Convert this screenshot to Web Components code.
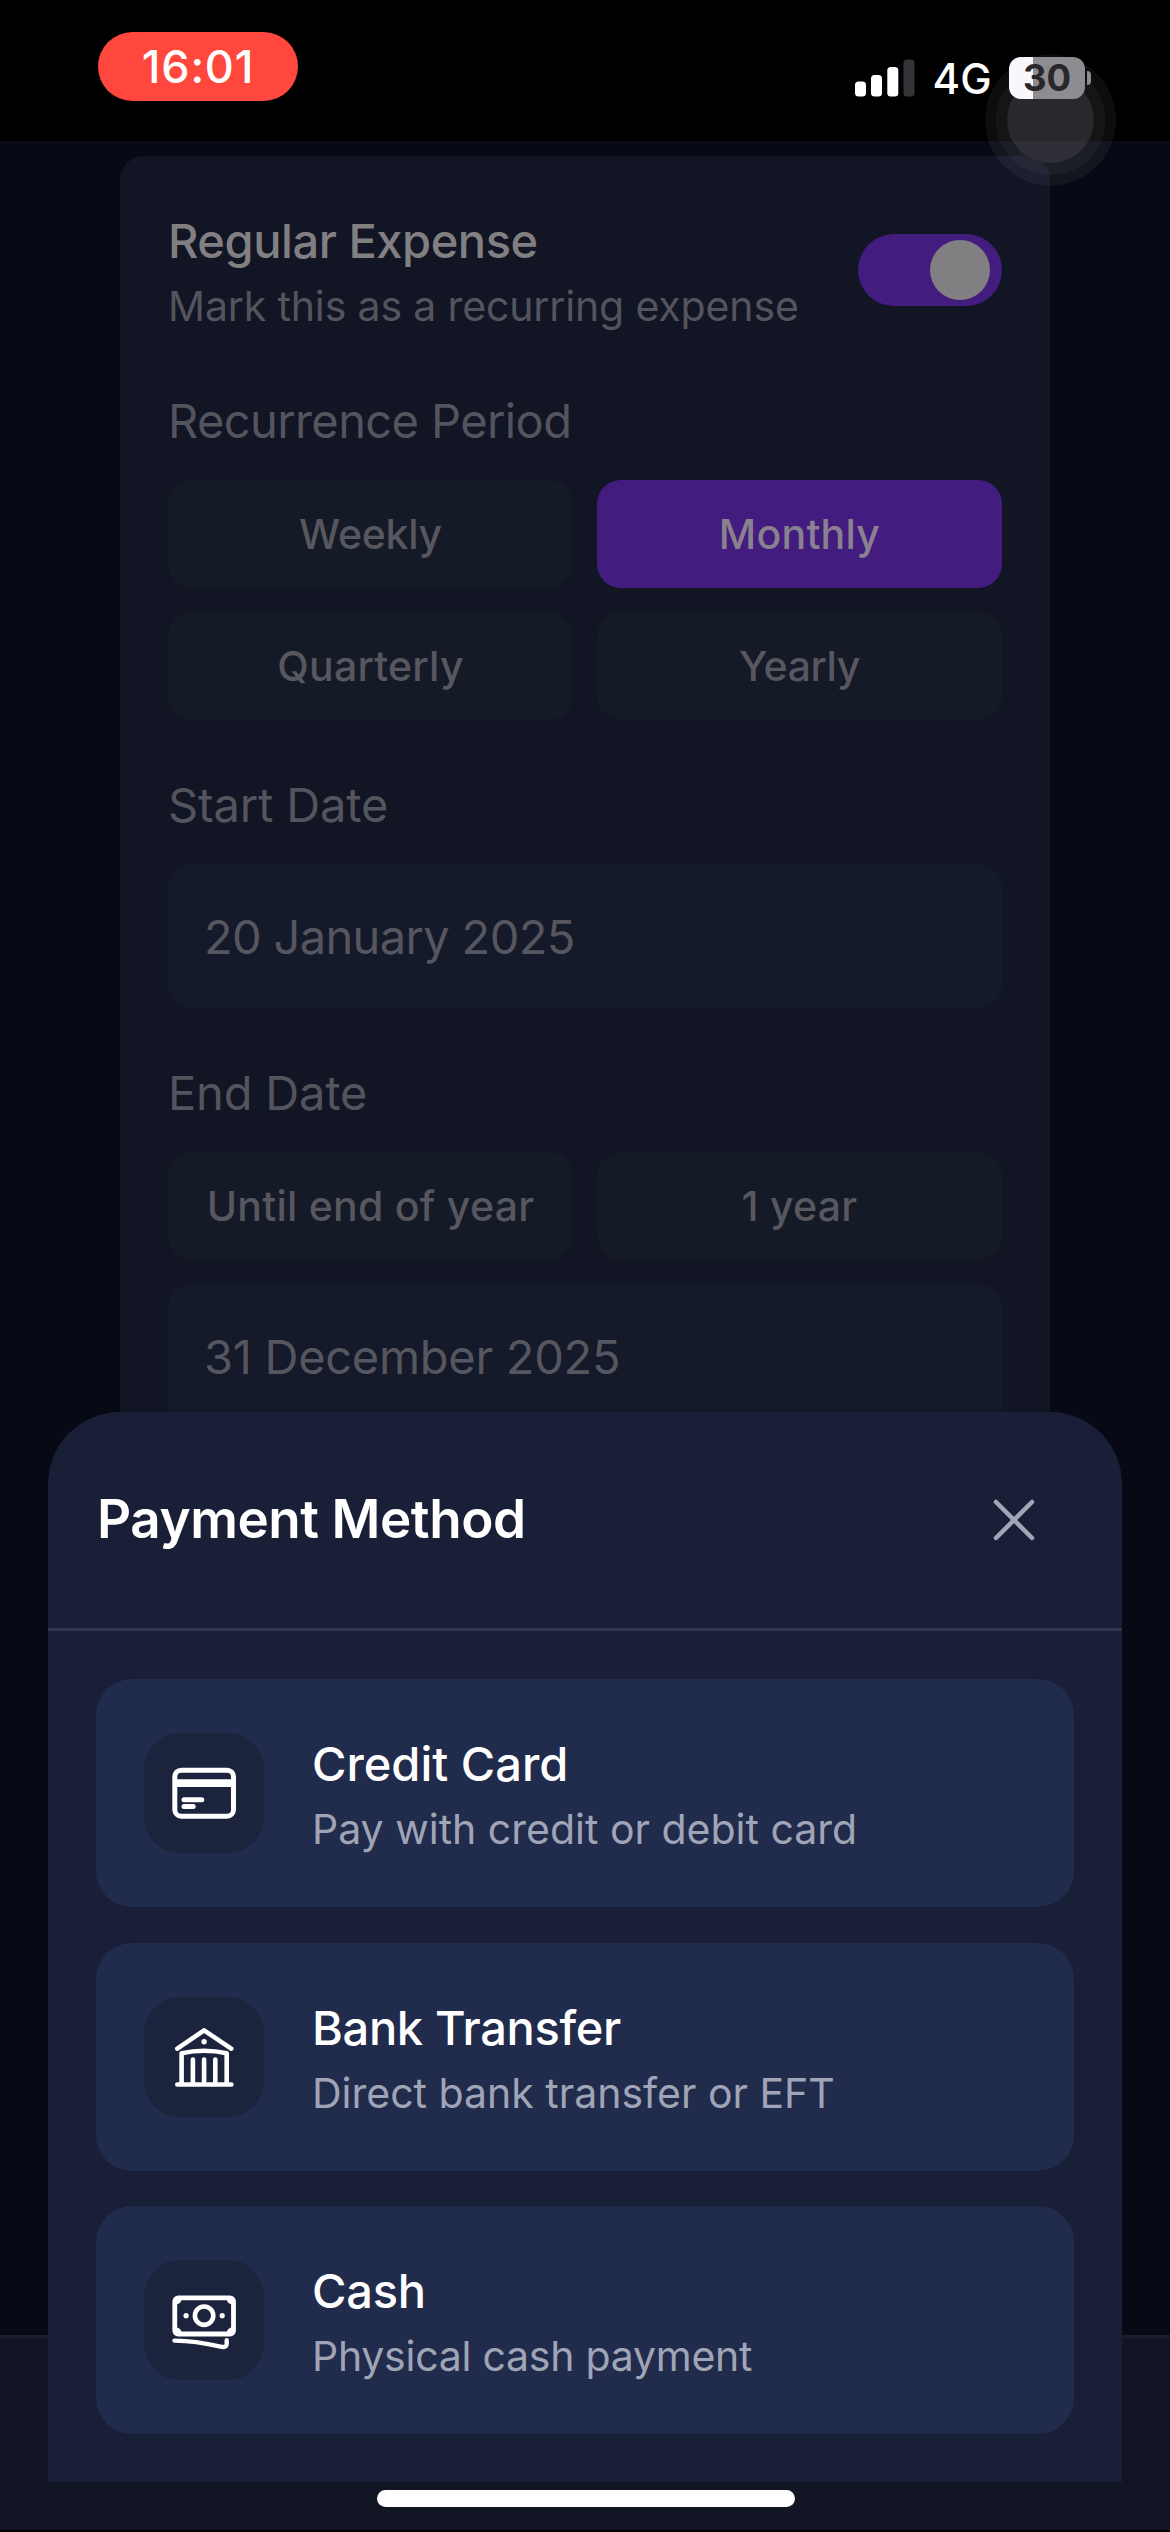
<!DOCTYPE html>
<html lang="en">
<head>
<meta charset="utf-8">
<title>Payment Method</title>
<style>
html, body { margin: 0; padding: 0; background: #070a14; }
body { width: 1170px; height: 2532px; overflow: hidden; font-family: Inter, "Liberation Sans", sans-serif; font-kerning: normal; }
</style>
</head>
<body>
<app-screen></app-screen>
<script>
function define(name, html) {
  const tpl = document.createElement('template');
  tpl.innerHTML = html;
  customElements.define(name, class extends HTMLElement {
    constructor() {
      super();
      this.attachShadow({ mode: 'open' }).appendChild(tpl.content.cloneNode(true));
    }
    connectedCallback() {
      if (this.hasAttribute('ls')) this.style.letterSpacing = this.getAttribute('ls') + 'px';
    }
  });
}

define('status-bar', `
<style>
:host { display: flex; justify-content: space-between; align-items: flex-start; box-sizing: border-box; height: 141px; padding: 32px 79px 0 98px; background: #000; color: #fff; }
.time { width: 200px; height: 69px; border-radius: 35px; background: #ff473d; display: flex; align-items: center; justify-content: center; font-size: 45px; font-weight: 500; letter-spacing: .8px; }
.right { display: flex; align-items: center; height: 91px; position: relative; z-index: 5; }
.bars { display: block; margin-right: 17px; }
.net { font-size: 42px; font-weight: 500; letter-spacing: .3px; margin-right: 17px; line-height: 50px; position: relative; top: 1px; }
.bat { width: 76px; height: 42px; border-radius: 12px; background: linear-gradient(90deg, #f9f7fb 24px, #8e8c90 24px); color: #29272b; display: flex; align-items: center; justify-content: center; font-size: 36.5px; font-weight: 700; }
.nub { width: 4px; height: 14px; border-radius: 0 5px 5px 0; background: #8e8c90; margin-left: 2px; }
</style>
<div class="time">16:01</div>
<div class="right">
  <svg class="bars" width="60" height="38" viewBox="0 0 60 38"><g fill="#fff"><rect x="0" y="22.5" width="11" height="15" rx="3.5"/><rect x="16" y="16" width="11" height="21.5" rx="3.5"/><rect x="32.3" y="8" width="11" height="29.500" rx="3.5"/></g><rect x="48.500" y="0.500" width="11" height="37" rx="3.5" fill="#353337"/></svg>
  <span class="net">4G</span>
  <div class="bat">30</div><div class="nub"></div>
</div>`);

define('touch-dot', `
<style>
:host { display: block; position: absolute; left: 984px; top: 54px; width: 132px; height: 132px; z-index: 2; }
svg { display: block; }
</style>
<svg width="132" height="132" viewBox="0 0 132 132"><circle cx="66.500" cy="66" r="65.500" fill="#fff" fill-opacity=".05"/><circle cx="66.500" cy="66" r="55" fill="#fff" fill-opacity=".035"/><circle cx="66.500" cy="66" r="43.500" fill="#2a282c"/><path d="M29 87A43.500 43.500 0 0 0 104 87Z" fill="#302f38"/></svg>`);

define('toggle-switch', `
<style>
:host { display: flex; align-items: center; justify-content: flex-end; box-sizing: border-box; width: 144px; height: 72px; border-radius: 36px; padding-right: 12px; background: #421d7f; flex: none; }
i { width: 60px; height: 60px; border-radius: 50%; background: #827f82; }
</style><i></i>`);

define('toggle-row', `
<style>
:host { display: flex; align-items: center; justify-content: space-between; height: 132px; }
.title { font-size: 47px; font-weight: 550; letter-spacing: -.45px; line-height: 74px; color: #827f82; }
.sub { font-size: 41px; letter-spacing: -.14px; line-height: 56px; color: #53545d; white-space: nowrap; }
.txt { margin-bottom: 2px; }
</style>
<div class="txt"><div class="title"><slot name="title"></slot></div><div class="sub"><slot></slot></div></div>
<toggle-switch></toggle-switch>`);

define('field-label', `
<style>:host { display: block; margin: 55px 0 29px; font-size: 47px; line-height: 60px; color: #53545d; }</style><slot></slot>`);

define('choice-grid', `
<style>:host { display: grid; grid-template-columns: 1fr 1fr; gap: 24px; }</style><slot></slot>`);

define('choice-button', `
<style>
:host { display: flex; align-items: center; justify-content: center; height: 108px; border-radius: 24px; background: #151a27; color: #56575f; font-size: 41px; font-weight: 500; white-space: nowrap; }
:host([selected]) { background: #421d7f; color: #89818f; }
</style><slot></slot>`);

define('date-field', `
<style>
:host { display: flex; align-items: center; height: 144px; box-sizing: border-box; padding: 0 36px; border-radius: 24px; background: #141a29; color: #55565f; font-size: 47px; white-space: nowrap; }
:host([stacked]) { margin-top: 24px; }
</style><slot></slot>`);

define('expense-card', `
<style>
:host { display: block; box-sizing: border-box; margin: 15px 120px 0; height: 1400px; padding: 48px; border-radius: 24px; background: #121524; }
</style><slot></slot>`);

define('bottom-bar', `
<style>
:host { display: block; box-sizing: border-box; height: 197px; border-top: 3px solid #1a1d2b; border-bottom: 2px solid #000; background: #121524; }
</style>`);

define('close-icon', `
<style>:host { display: block; width: 44px; height: 44px; margin-right: 38px; } svg { display: block; }</style>
<svg width="44" height="44" viewBox="0 0 44 44"><path d="M4 4L40 40M40 4L4 40" stroke="#a1a5b5" stroke-width="4.500" stroke-linecap="round"/></svg>`);

define('payment-option', `
<style>
:host { display: flex; align-items: center; gap: 48px; box-sizing: border-box; height: 228px; padding: 0 48px; border-radius: 36px; background: #212b4b; }
.tile { width: 120px; height: 120px; border-radius: 36px; background: #1b233d; flex: none; }
.name { font-size: 47px; font-weight: 500; line-height: 74px; color: #fff; white-space: nowrap; }
.sub { font-size: 41px; line-height: 57px; color: #a0a4b7; white-space: nowrap; }
.txt { margin-bottom: 1px; }
</style>
<div class="tile"><slot name="icon"></slot></div>
<div class="txt"><div class="name"><slot name="name"></slot></div><div class="sub"><slot></slot></div></div>`);

define('card-icon', `
<style>:host, svg { display: block; }</style>
<svg width="120" height="120" viewBox="0 0 120 120" fill="none" stroke="#fff" stroke-width="5" stroke-linecap="round"><rect x="30.800" y="37.200" width="58.700" height="46" rx="6.500"/><path d="M31 50.100H89" stroke-width="7.600" stroke-linecap="butt"/><path d="M40 66.800H57.800M40 73.600H49.200"/></svg>`);

define('bank-icon', `
<style>:host, svg { display: block; }</style>
<svg width="120" height="120" viewBox="0 0 120 120" fill="none" stroke="#fff" stroke-width="4.600" stroke-linecap="round" stroke-linejoin="round"><path d="M33.300 51.600L60.100 33.400L87.200 51.600M33.300 87.500H87.400M37.600 87V56.200Q60.100 51.200 82.700 56.200V87M48.900 62.500V87M60.100 62.500V87M71.300 62.500V87"/><circle cx="60.100" cy="44.700" r="2.700" fill="#fff" stroke="none"/></svg>`);

define('cash-icon', `
<style>:host, svg { display: block; }</style>
<svg width="120" height="120" viewBox="0 0 120 120" fill="none" stroke="#fff" stroke-width="4.800" stroke-linecap="round" stroke-linejoin="round"><rect x="30.800" y="37.800" width="58.700" height="36.200" rx="3.500"/><circle cx="60.100" cy="55.700" r="9.200" stroke-width="4.600"/><g fill="#fff" stroke="none"><circle cx="42.100" cy="55.700" r="2.600"/><circle cx="78.200" cy="55.700" r="2.600"/><path d="M32 39H37.500Q37.500 43.500 32 44.500ZM88.300 39H82.800Q82.800 43.500 88.300 44.500ZM32 72.800H37.500Q37.500 68.300 32 67.300ZM88.300 72.800H82.800Q82.800 68.300 88.300 67.300Z"/></g><path d="M30.500 80.600C48 80.600 61 83 76.500 86.700C80.500 87.700 82.700 86.500 82.700 83.500V80.300" stroke-width="4.400"/></svg>`);

define('payment-sheet', `
<style>
:host { display: flex; flex-direction: column; position: absolute; z-index: 3; left: 48px; top: 1412px; width: 1074px; height: 1070px; border-radius: 72px 72px 0 0; background: #181f37; }
header { display: flex; align-items: center; justify-content: space-between; box-sizing: border-box; height: 219px; padding: 0 48px 0 49px; border-bottom: 3px solid #2f364b; }
h1 { margin: 0 0 3px; font-size: 53px; font-weight: 600; letter-spacing: -.44px; line-height: 64px; color: #fff; }
.list { display: flex; flex-direction: column; gap: 35.500px; padding: 48px 48px 0; }
</style>
<header><h1><slot name="title"></slot></h1><close-icon></close-icon></header>
<div class="list"><slot></slot></div>`);

define('home-indicator', `
<style>:host { display: block; position: absolute; z-index: 4; left: 377px; top: 2490px; width: 418px; height: 17px; border-radius: 9px; background: #fff; }</style>`);

define('app-screen', `
<style>
:host { display: flex; flex-direction: column; position: relative; width: 1170px; height: 2532px; overflow: hidden; background: #070a14; }
bottom-bar { margin-top: auto; }
span { white-space: nowrap; }
</style>
<status-bar></status-bar>
<expense-card>
  <toggle-row><span slot="title">Regular Expense</span>Mark this as a recurring expense</toggle-row>
  <field-label ls="-.6">Recurrence Period</field-label>
  <choice-grid>
    <choice-button ls="-.25">Weekly</choice-button>
    <choice-button ls=".23" selected>Monthly</choice-button>
    <choice-button ls=".24">Quarterly</choice-button>
    <choice-button ls="-.4">Yearly</choice-button>
  </choice-grid>
  <field-label ls="-.16">Start Date</field-label>
  <date-field ls="-.65">20 January 2025</date-field>
  <field-label ls="-.18">End Date</field-label>
  <choice-grid>
    <choice-button ls=".26">Until end of year</choice-button>
    <choice-button ls=".26">1 year</choice-button>
  </choice-grid>
  <date-field stacked ls="-.28">31 December 2025</date-field>
</expense-card>
<bottom-bar></bottom-bar>
<touch-dot></touch-dot>
<payment-sheet>
  <span slot="title">Payment Method</span>
  <payment-option><card-icon slot="icon"></card-icon><span slot="name">Credit Card</span>Pay with credit or debit card</payment-option>
  <payment-option><bank-icon slot="icon"></bank-icon><span slot="name" style="letter-spacing:-.34px">Bank Transfer</span>Direct bank transfer or EFT</payment-option>
  <payment-option ls="-.25"><cash-icon slot="icon"></cash-icon><span slot="name">Cash</span>Physical cash payment</payment-option>
</payment-sheet>
<home-indicator></home-indicator>`);
</script>
</body>
</html>
